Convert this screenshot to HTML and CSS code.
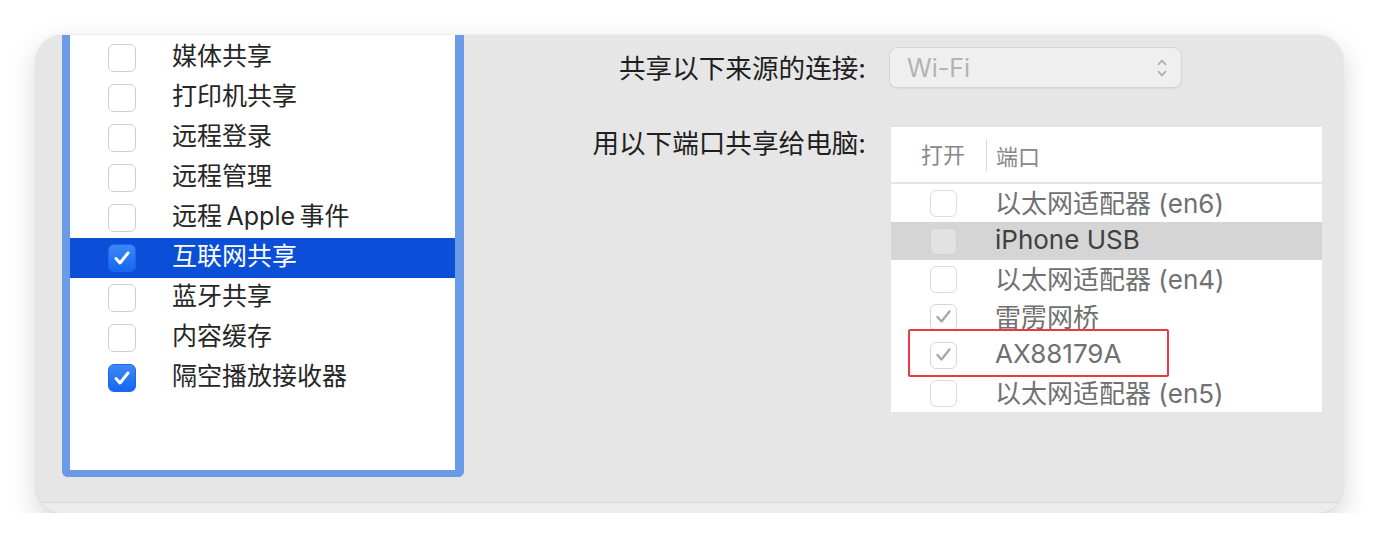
FILE: index.html
```html
<!doctype html>
<html lang="zh-CN">
  <head>
    <meta charset="UTF-8" />
    <title>共享</title>
    <link rel="stylesheet" href="styles.css">
  </head>
  <body>
    <div class="window">
      <div class="panes">
        <!-- Service list -->
        <div class="service-list">
          <div class="service"><span class="check"></span><span class="name">媒体共享</span></div>
          <div class="service"><span class="check"></span><span class="name">打印机共享</span></div>
          <div class="service"><span class="check"></span><span class="name">远程登录</span></div>
          <div class="service"><span class="check"></span><span class="name">远程管理</span></div>
          <div class="service"><span class="check"></span><span class="name">远程&#8201;Apple&#8201;事件</span></div>
          <div class="service selected">
            <span class="check on"><svg viewBox="0 0 28 28"><path d="M8 14.5l4 4.5 8-10"/></svg></span>
            <span class="name">互联网共享</span>
          </div>
          <div class="service"><span class="check"></span><span class="name">蓝牙共享</span></div>
          <div class="service"><span class="check"></span><span class="name">内容缓存</span></div>
          <div class="service">
            <span class="check on"><svg viewBox="0 0 28 28"><path d="M8 14.5l4 4.5 8-10"/></svg></span>
            <span class="name">隔空播放接收器</span>
          </div>
        </div>

        <!-- Settings -->
        <div class="settings">
          <div class="field-label">共享以下来源的连接:</div>
          <div class="popup">
            <span>Wi-Fi</span>
            <svg class="chevrons" viewBox="0 0 10 22"><path d="M1.5 7.5L5 3.5l3.5 4M1.5 14.5L5 18.5l3.5-4"/></svg>
          </div>

          <div class="field-label top">用以下端口共享给电脑:</div>
          <div class="ports">
            <div class="ports-head">
              <span class="col-on">打开</span>
              <span class="col-port">端口</span>
            </div>
            <div class="port"><span class="check"></span><span>以太网适配器 (en6)</span></div>
            <div class="port highlight"><span class="check"></span><span>iPhone USB</span></div>
            <div class="port"><span class="check"></span><span>以太网适配器 (en4)</span></div>
            <div class="port">
              <span class="check on"><svg viewBox="0 0 27 27"><path d="M7.5 14l4 4.5 8-10"/></svg></span>
              <span>雷雳网桥</span>
            </div>
            <div class="port">
              <span class="check on"><svg viewBox="0 0 27 27"><path d="M7.5 14l4 4.5 8-10"/></svg></span>
              <span>AX88179A</span>
            </div>
            <div class="port"><span class="check"></span><span>以太网适配器 (en5)</span></div>
            <div class="marker"></div>
          </div>
        </div>
      </div>
      <div class="footer"></div>
    </div>
  </body>
</html>
```

FILE: styles.css
```css
/* Page */
body {
  margin: 0;
  background: #fff;
  font-family: "Inter", "Noto Sans CJK SC", sans-serif;
}

/* Window */
.window {
  margin: 35px 0 0 36px;
  width: 1307px;
  height: 478px;
  border-radius: 26px;
  overflow: hidden;
  background: #e5e6e5;
  box-shadow: 0 10px 28px rgba(0, 0, 0, 0.17), 0 0 2px rgba(0, 0, 0, 0.12);
  display: flex;
  flex-direction: column;
}

.panes {
  display: flex;
  height: 467px;
}

.footer {
  height: 10px;
  border-top: 1px solid #d7d8d7;
  background: #ebeceb;
}

/* Service list */
.service-list {
  margin-left: 26px;
  width: 402px;
  height: 442px;
  box-sizing: border-box;
  border: 0 solid #6b9be8;
  border-width: 0 9px 7px 8px;
  border-radius: 0 0 6px 6px;
  background: #fff;
  padding-top: 3px;
  flex: none;
}

.service {
  display: flex;
  align-items: center;
  height: 40px;
  padding-left: 38px;
  color: #262626;
}

.service .name {
  margin-left: 36px;
  font-size: 25px;
  line-height: 1;
  padding-bottom: 3px;
}

.service.selected {
  background: #0b4ed8;
  color: #fff;
}

.check {
  width: 28px;
  height: 28px;
  box-sizing: border-box;
  border: 1.5px solid #cdcdcd;
  border-radius: 6px;
  background: #fff;
  flex: none;
  display: flex;
}

.check svg {
  width: 100%;
  height: 100%;
  fill: none;
  stroke: #fff;
  stroke-width: 3;
  stroke-linecap: round;
  stroke-linejoin: round;
}

.check.on {
  background: linear-gradient(#3d88f8, #1566f0);
  border-color: #1b68ee;
}

.check.on svg {
  margin: -1.5px;
  width: 28px;
  height: 28px;
}

/* Settings side */
.settings {
  flex: 1;
  display: grid;
  grid-template-columns: 402px 1fr;
  column-gap: 23px;
  row-gap: 39px;
  align-content: start;
  padding-top: 12px;
}

.field-label {
  text-align: right;
  font-size: 26.6px;
  line-height: 32px;
  color: #1f1f1f;
  align-self: center;
}

.field-label.top {
  align-self: start;
}

.popup {
  width: 293px;
  height: 41px;
  box-sizing: border-box;
  border: 1px solid #d5d6d5;
  border-radius: 8px;
  background: #efefef;
  box-shadow: 0 1px 1px rgba(0, 0, 0, 0.05);
  display: flex;
  align-items: center;
  justify-content: space-between;
  padding: 0 14px 0 17px;
  color: #b3b3b3;
  font-size: 25px;
}

.chevrons {
  width: 10px;
  height: 22px;
  fill: none;
  stroke: #a9a9a9;
  stroke-width: 1.6;
  stroke-linecap: round;
  stroke-linejoin: round;
}

/* Port table */
.ports {
  position: relative;
  margin-left: 2px;
  width: 431px;
  height: 285px;
  background: #fff;
}

.ports-head {
  display: flex;
  align-items: center;
  height: 55px;
  border-bottom: 2px solid #e4e4e4;
  font-size: 22px;
  color: #888;
}

.col-on {
  width: 96px;
  box-sizing: border-box;
  padding-left: 30px;
  border-right: 1px solid #d9d9d9;
  line-height: 32px;
}

.col-port {
  padding-left: 9px;
}

.port {
  display: flex;
  align-items: center;
  height: 38px;
  padding-left: 39px;
  font-size: 26px;
  color: #707070;
}

.port span:last-child {
  padding-bottom: 3px;
}

.port .check {
  width: 27px;
  height: 27px;
  border-color: #dcdcdc;
  margin-right: 38px;
}

.port .check.on {
  background: #fff;
  border-color: #d6d6d6;
}

.port .check.on svg {
  width: 27px;
  height: 27px;
  stroke: #a8a8a8;
  stroke-width: 2.4;
}

.port.highlight {
  background: #d5d5d5;
  color: #404040;
}

.port.highlight .check {
  background: #e2e2e2;
  border-color: #d2d2d2;
}

/* Red annotation box */
.marker {
  position: absolute;
  left: 17px;
  top: 202px;
  width: 261px;
  height: 48px;
  box-sizing: border-box;
  border: 2px solid #ea3a41;
  border-radius: 2px;
}
```
